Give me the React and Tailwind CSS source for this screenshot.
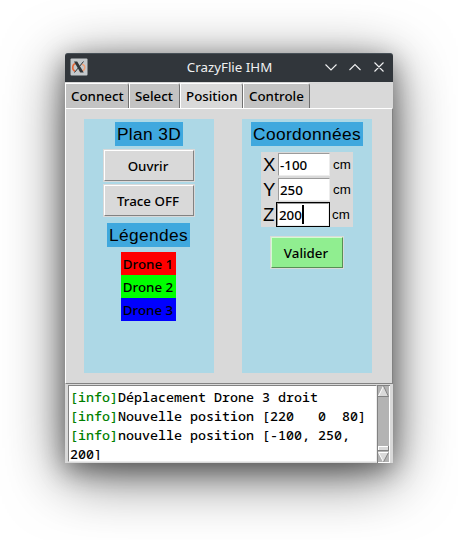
const UI = "font-['Noto_Sans','DejaVu_Sans',sans-serif] font-medium text-[13.33px]";
const ARIAL = "font-['Liberation_Sans',Arial,sans-serif]";

function Tab({ label, active, width }) {
  return (
    <div className={`${width} flex border-t border-l border-r border-t-white border-l-white border-r-[#707070] rounded-tr-[3px] pl-[5px] ${active ? "h-[26px] bg-[#d9d9d9]" : "h-[25px] bg-[#c3c3c3]"}`}>
      <span className="whitespace-nowrap leading-[25px]">{label}</span>
    </div>
  );
}

function Heading({ children, width }) {
  return (
    <div className={`${width} ${ARIAL} h-6 bg-[#3fa8de] text-center text-[17.33px] font-normal leading-[24px] tracking-[0.35px] whitespace-nowrap`}>
      {children}
    </div>
  );
}

function Button({ children, width, tone }) {
  return (
    <div className={`${width} h-[33px] border border-[#d9d9d9]`}>
      <div className={`flex h-[31px] items-center justify-center border border-b-[1.5px] pt-0.5 pr-0.5 ${tone}`}>
        <span className="leading-none">{children}</span>
      </div>
    </div>
  );
}

function Field({ axis, value, focused }) {
  return (
    <div className="flex h-[25px] items-center">
      <span className={`${ARIAL} w-[15px] pl-0.5 pt-0.5 text-[18.67px] font-normal leading-none`}>{axis}</span>
      {focused ? (
        <div className="flex h-[25px] w-[54px] items-center border border-black bg-white">
          <div className="flex h-[23px] w-[52px] items-center border border-t-[#9b9b9b] border-l-[#9b9b9b] border-r-[#ececec] border-b-[#ececec] pt-0.5 pl-px">
            <span className="leading-none">{value}</span>
            <span className="mb-0.5 h-[19px] w-0.5 bg-black" />
          </div>
        </div>
      ) : (
        <div className="ml-0.5 flex h-[23px] w-[52px] items-center border border-t-[#9b9b9b] border-l-[#9b9b9b] border-r-[#ececec] border-b-[#ececec] bg-white pt-0.5 pl-px">
          <span className="leading-none">{value}</span>
        </div>
      )}
      <span className={`${ARIAL} text-[13.33px] font-normal leading-none ${focused ? "ml-0.5" : "ml-[3px]"}`}>cm</span>
    </div>
  );
}

function LogLine({ children }) {
  return (
    <div>
      <span className="text-[#008000]">[info]</span>
      {children}
    </div>
  );
}

export default function App() {
  return (
    <div className={`${UI} h-[540px] w-[458px] overflow-hidden bg-white pt-[53px] pl-[65px] text-black`}>
      <div className="flex h-[410px] w-[328px] flex-col rounded-t-[3px] bg-[#d9d9d9] shadow-[0_13px_60px_rgba(0,0,0,0.6),0_7px_26px_rgba(0,0,0,0.4)]">
        <div className="flex h-[29px] items-center rounded-t-[3px] border-t border-[#475057] bg-[#31363b] pl-[5px] pr-[7px] text-[#eff0f1]">
          <svg className="mb-0.5" width="18" height="18" viewBox="0 0 18 18">
            <rect x=".5" y=".5" width="17" height="17" rx="1" fill="#c5c9cc" />
            <path d="M7 5.500C2 5 1.500 11.500 5 13.300" fill="none" stroke="#e56a3c" strokeWidth="1.600" />
            <path d="M12 6.200c4.500 1 3.500 7.300-2.500 7.300" fill="none" stroke="#f0a078" strokeWidth="1.500" />
            <path d="M4 3.500h3.200l6.500 11h-3.400z" fill="#30363a" />
            <path d="M13.500 3.500 9.800 8M8.200 10 4.500 14.500" stroke="#30363a" strokeWidth="1" />
          </svg>
          <div className="flex-1 pl-[48px] text-center font-normal leading-none">CrazyFlie IHM</div>
          <svg className="mb-0.5 ml-auto" width="63" height="14" viewBox="0 0 63 14" fill="none" stroke="#eff0f1" strokeWidth="1.1">
            <path d="M2.500 4.500 8 10l5.500-5.500M26.500 10 32 4.500 37.500 10M51.500 2.500l9 9M60.500 2.500l-9 9" />
          </svg>
        </div>
        <div className="flex h-[26px] items-start pt-px">
          <Tab label="Connect" width="w-16" />
          <Tab label="Select" width="w-[51px]" />
          <Tab label="Position" width="w-[63px]" active />
          <Tab label="Controle" width="w-[67px]" />
        </div>
        <div className="flex h-[276px] gap-7 border-t border-l border-r border-b border-t-white border-l-white border-r-[#828282] border-b-[#828282] pt-2.5 pl-[18px]">
          <div className="flex h-[254px] w-[130px] flex-col items-center bg-[#add8e6] pt-[3px]">
            <Heading width="w-[68px]">Plan 3D</Heading>
            <div className="mt-[3px] flex flex-col gap-0.5">
              <Button width="w-[92px]" tone="bg-[#d9d9d9] border-t-white border-l-white border-r-[#828282] border-b-[#828282]">Ouvrir</Button>
              <Button width="w-[92px]" tone="bg-[#d9d9d9] border-t-white border-l-white border-r-[#828282] border-b-[#828282]">Trace OFF</Button>
            </div>
            <div className="mt-1.5 mr-px">
              <Heading width="w-[83px]">Légendes</Heading>
            </div>
            <div className="mt-[5px] mr-0.5 w-[55px] text-center leading-[25px]">
              <div className="h-[23px] bg-[#ff0000]">Drone 1</div>
              <div className="h-[23px] bg-[#00ff00]">Drone 2</div>
              <div className="h-[23px] bg-[#0000ff]">Drone 3</div>
            </div>
          </div>
          <div className="flex h-[254px] w-[130px] flex-col items-center bg-[#add8e6] pt-[3px]">
            <Heading width="w-28">Coordonnées</Heading>
            <div className="mt-1.5 h-[75px] w-[92px] bg-[#d9d9d9]">
              <Field axis="X" value="-100" />
              <Field axis="Y" value="250" />
              <Field axis="Z" value="200" focused />
            </div>
            <div className="mt-[9px]">
              <Button width="w-[74px]" tone="bg-[#90ee90] border-t-[#d3fbd3] border-l-[#d3fbd3] border-r-[#568f56] border-b-[#568f56]">Valider</Button>
            </div>
          </div>
        </div>
        <div className="flex h-[79px] pt-px pl-[3px]">
          <div className="h-[77px] w-[309px] border border-t-[#828282] border-l-[#828282] border-r-[#ececec] border-b-[#ececec] bg-white pt-0.5 pl-px">
            <div className="h-[72px] overflow-hidden whitespace-pre font-['Noto_Sans_Mono','DejaVu_Sans_Mono',monospace] leading-[19px]">
              <LogLine>Déplacement Drone 3 droit</LogLine>
              <LogLine>Nouvelle position [220   0  80]</LogLine>
              <LogLine>nouvelle position [-100, 250,</LogLine>
              <div>200]</div>
            </div>
          </div>
          <svg width="13" height="78" viewBox="0 0 13 78">
            <rect width="13" height="78" fill="#b3b3b3" />
            <path d="M.5 78V0M0 .5h13" stroke="#828282" />
            <path d="M12.500 1v77M1 77.500h12" stroke="#fff" />
            <path d="M6.500 1 11.500 11H1.500z" fill="#d9d9d9" />
            <path d="M6.500 1 1.500 11" stroke="#fff" />
            <path d="M6.500 1 11.500 11.500H1" fill="none" stroke="#828282" />
            <rect x="1" y="61" width="11" height="5" fill="#d9d9d9" />
            <path d="M1 61.500h11M1.500 61v5" stroke="#fff" />
            <path d="M1 65.500h11M11.500 61v5" stroke="#828282" />
            <path d="M1.500 67.500h10l-5 9.500z" fill="#d9d9d9" />
            <path d="M11.500 67.500h-10l5 9.500" fill="none" stroke="#fff" />
            <path d="M11.500 67.500 6.500 77" stroke="#828282" />
          </svg>
        </div>
      </div>
    </div>
  );
}
